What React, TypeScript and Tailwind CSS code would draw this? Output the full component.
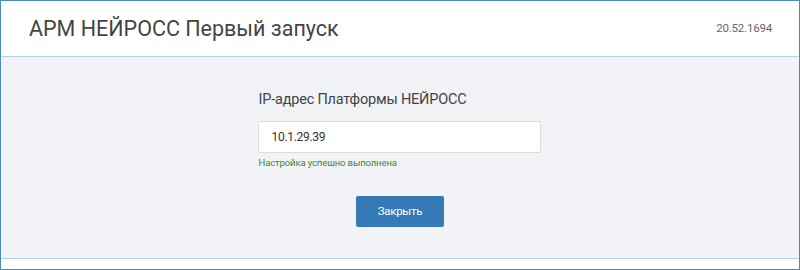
export default function App() {
  return (
    <div
      className="w-[800px] h-[270px] border border-[#4a8dc6] flex flex-col bg-white text-[#444]"
      style={{ fontFamily: 'Roboto, "Noto Sans", sans-serif' }}
    >
      <div className="h-[56px] flex items-center justify-between pl-[28px] pr-[27px] border-b border-[#b5d3ee] bg-white">
        <div className="text-[21.5px] leading-none text-[#444]">АРМ НЕЙРОСС Первый запуск</div>
        <div className="text-[11.5px] text-[#666] mt-[1px] tracking-[-0.2px]">20.52.1694</div>
      </div>
      <div className="flex-1 bg-[#f2f3f7] border-b border-[#b5d3ee] flex justify-center">
        <div className="w-[283px] flex flex-col pt-[34px] ml-[-2px]">
          <div className="text-[14.5px] leading-[18px] text-[#444] pl-[1px] tracking-[-0.2px]">IP-адрес Платформы НЕЙРОСС</div>
          <div className="mt-[12px] h-[32px] bg-white border border-[#dcdcdc] rounded-[2px] flex items-center pl-[13px] text-[12px] text-[#333] tracking-[-0.3px]">
            10.1.29.39
          </div>
          <div className="mt-[3px] text-[9.5px] leading-[14px] text-[#3a863a] pl-[1px] tracking-[-0.12px]">Настройка успешно выполнена</div>
          <div className="flex justify-center mt-[26px] pl-[2px]">
            <button className="w-[88px] h-[31px] bg-[#337ab7] text-white text-[11.5px] tracking-[-0.3px] rounded-[2px]">Закрыть</button>
          </div>
        </div>
      </div>
      <div className="h-[10px] bg-white" />
    </div>
  );
}
